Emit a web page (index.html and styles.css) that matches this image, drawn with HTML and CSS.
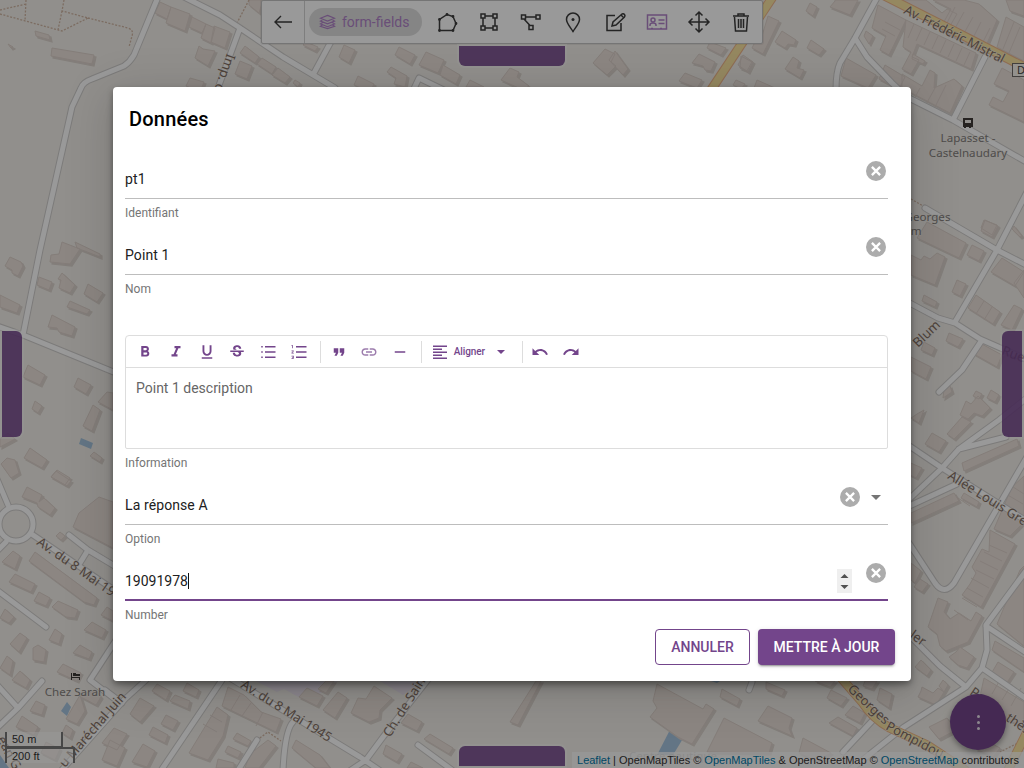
FILE: index.html
```html
<!DOCTYPE html>
<html lang="fr">
<head>
<meta charset="utf-8">
<title>Données</title>
<link rel="stylesheet" href="styles.css">
</head>
<body>
<main class="app">
<svg class="map" viewBox="0 0 1024 768" aria-hidden="true">
  <defs>
    <path id="buildings" d="M35 31l14 4 1 5-14-4zM52 48l42 7-2 9-41-8zM8 44l5 3-2 1zM160 2l11 5-4 12-12-6zM171 7l19 7-5 17-19-8zM192 17l14 7-4 9-13-6zM206 24l9 4-4 15-10-5zM214 26l16 6-5 16-14-6zM199 46l4 3 12 2-7 15-13-8zM245 46l14 11-4 6-15-10zM262 58l14 9-4 7-15-10zM278 68l12 9-5 6-13-8zM240 61l12 5-5 13-12-5zM190 78l14 4-4 10-14-6zM295 80l5 3-2 4-5-4zM249 0h14l-4 13-10-8z
    M399 47l16 8-5 9-15-9zM426 52l18 8-6 13-19-8zM443 65l17 10-4 9-16-9zM391 67l16 9-2 11-11-3 2-6-9-6zM344 45l11 5-6 13-10-6zM358 76l16 8-4 8-16-7zM470 80l14 7h-18zM306 42l12 5-3 4-12-6zM510 68l9 4-2 5 12 9-6 4-22-10z
    M605 49l10 5-4 8 5 4-9 9-14-12zM615 51l13 18-5 6-14-15zM710 42l16 6-5 7-14-7zM699 54l16 8-4 9-6-1-2-4-11-3zM743 55l10 7-5 10-10-7zM685 73l17 7-5 8-18-7zM736 80l9 4-4 5-8-4z
    M768 16l11 5-16 33-11-6 7-14 3 2zM782 31l14 9-2 5-6-1-3 4-10-6zM811 40l13 9-5 6-12-7zM793 57l6 4-2 7 7 2-4 8-15-9zM810 3l7 4-4 9-7-5zM741 56l11 6-5 9-7-3zM835 0h23l-8 15-20-8 5-6zM757 80l18 8h-21z
    M878 5l28 15-17 35-9-5 6-14-14-8zM906 20l70 33-5 16-54-25-5 13 7 3-8 14-9-5 9-17-8-5zM846 58l30 17-8 13-27-12zM902 74l20 12 8-16 5 3-1 15 20-9 8 7-12 27-48-25zM885 65l20 12-6 12-20-10zM866 31l7 5-4 8-5-8zM913 54l12 7-2 3-11-5z
    M1002 68l22 12v42l-35-17 4-8 10 5 6-11-15-7zM902 0h24l16 13 5-4 10 5-7 12zM933 0h31l15 4 18 16-14 33-43-24 11-20zM1006 17l18 10v34l-27-14zM1006 0h18v16l-14-5z
    M985 220l13 6-6 11-11-6zM927 222l39 21-7 15-42-20zM911 255l10 5 3-4 6 3 7-6 8 4-10 28-24-10zM972 245l12 6-5 10-12-6zM984 220l13 5-5 10-11-7zM957 280l9 4-6 12-8-4zM924 295l13 7-2 5-13-6zM1002 258l22 14-9 14-24-14zM976 295l24 17-7 12-25-16zM1014 305l8 4-10 21-11-5zM1014 226l8 10-2 1-8-8zM949 333l14 6-5 8-12-6zM980 343l22 12-5 12-23-13zM924 342l11 6-3 7-11-5zM911 357l20 10-5 12-15-8zM966 401l5 3 7-8 12 12-8 8-8-3-6 6-8-4zM962 417l9 5-17 17-7-5zM932 433l14 8-7 11-14-8zM944 389l6-3 2 6-9 6zM917 414l7-4-5 13-8-5zM962 463l55-24 2 7-55 25zM911 513l43-20 5 8-48 22zM964 493l15 9-2 5-16-9zM976 391l6 3-3 5-6-3zM991 390l8 5-4 7-8-4zM1024 270v28l-10-15z
    M904 460l18 8-6 10-12-6zM1012 487l12-11v46l-14 14-16-7zM990 530l25 14-34 63-19-12 8-11 6-11-4-6 10-18 7 3zM938 598l10 4-4 10 6 7 9-6 12 8 5-9 6 4-14 26-22 9-6-5-3-12-9-7zM1020 570l4-4v80l-27-22zM911 563l10 8-6 12-4-3zM920 579l8 5-6 8-8-5zM956 652l4-5 14 10-7 11-9-3-9-8zM921 660l10 10-4 6-12-9zM922 687l11 6 5-5 6 4-8 13-18-8 3-6zM943 680l5 5-4 7-5-6zM995 641l29 17v14l-32-22zM998 662l16 10-8 12-15-10zM984 678l40 24v26l-25-13-20-14zM929 727l18-9 9 12-17 9zM985 740l15 8-7 9-17-8z
    M10 257l11 5 2 4-5 10-6-3v-3l-7-4zM62 242l18 7-10 15-20-2 1-7 8-1zM75 242l25 12v3l-23-9zM39 277l13 5-3 8-12-5zM62 273l13 12-5 8-11-5 2-8-3-1zM88 284l15 9-6 9-13-8zM70 301l20 9-3 4-20-7zM52 315l23 12-3 9-13-4-2-4-9-1zM0 295l20 10-3 8-17-6zM28 365l17 10-5 10-17-8zM78 378l13 7-5 9-12-7zM93 405l7 5-8 21-9-5zM107 392l6 1v17l-15-8zM35 401l7 5-4 7-6-4zM30 448l17 12-5 8-18-10zM7 458l8 2 4 13-8 5-10-14zM94 452l8 6-2 4-10-6zM57 470l13 8-5 7-14-8zM8 433l7 6-15 8v-8z
    M56 471l15 10-4 5-16-9zM27 487l15 8-3 7 5-4 11 10-5 7-12-8-1-4-15-6zM99 497l14 5v46l-40-21 6-14zM60 532l5 4-4 4-5-4zM13 551l7 5-5 13-13-7zM35 552l62 46-3 7-10-3-55-41zM15 574l20 10-4 8-22-10zM39 592l11 6-4 8-12-5zM58 601l20 9-3 8-9-1-14-10zM5 609l9 8-5 6-9-5zM92 622l14 8-4 8-18-8zM55 629l7 5-3 10-10-4zM20 633l7 5-8 14-9-8zM33 648l5-3 8 5-2 12-11-2zM80 645l12 7-3 7-16-6zM63 664l18 9-4 8-20-9zM7 656l6 5-3 14-10-7zM20 671l10 9-4 8-14-8zM36 701l9 4-3 10-12-4zM22 716l16 11-4 8-18-8zM80 695l5 16-8 13-11-5zM95 690l6 7-5 8-17-9zM46 742l14 7-5 11-14-7zM66 725l7 5-3 8-8-5zM107 607l6 4v10l-12-6zM110 740l15 8-8 18-15-6z
    M140 698l14 8-14 16-10-8zM166 715l12 6-5 9-12-6zM187 683l12 7-3 7-13-6zM157 684l13 7-4 9-14-9zM175 695l15 6-2 8-18-8zM153 727l15 8-3 8-16-8zM114 728l13 6-10 16-15-7zM143 744l12 7-8 16-15-5zM217 707l11 8-5 21-15 24-19-7zM228 687l16 8 17 17 20 7-5 13-54-26zM237 733l14 8-3 5-15-7zM228 746l13 6-3 6-13-6zM218 759l16 4v5h-18zM268 740l8 6-17 22h-14l5-14zM296 740l24 15 10 13h-14l-24-20zM307 688l16 8-6 10-18-9zM338 692l9 6-12 20-12-8zM326 681h8l-8 12-8-4zM374 686l18 12-12 12-1 8-10 4-18-9 7-15 8 1zM408 714l14 8-5 9-16-8zM386 745l16 9-5 8-14-8zM430 734l23 14-4 6-25-15zM411 762l12 6h-16zM536 681h5l-23 44-8-3z
    M657 684l46 25 3-5 8 5-22 35-14-7-28-20 7-9-4-7zM722 689l18 10-3 7-17-9zM768 706l24 12-3 10 3 8-34-15zM724 718l48 25-3 10-62-1zM766 682l19 8-3 6-16-7zM803 738l28 15-15 8-17-8zM838 717l19 11-4 8-24-13zM831 690l16 8-6 8-14-8zM853 706l12 7-5 10-15-8zM880 688l12 6-3 14-12-8zM865 681h12l-5 8-9-3zM815 681h20l-5 6z"/>
    <g id="roads">
      <path d="M158-3L134 55Q130 62 124 66L92 79Q83 82 81 88L72 107L40 250L23 335M-3 326L23 335L116 373M180-5L220 15L240 28L283 57L335 88M240 28L218 88M340 25L314 73M411 95L419 78L456 96"/>
      <path d="M878-4L855 38L840 63Q836 72 836 90M855 38L867 57L892 83L907 97L953 120L1028 163M985 57L953 120M1028 190L997 250L955 322M925 208L997 250L1028 266M904 300L938 318L955 323L980 339L1028 360M982 340L962 370L939 392M1028 397L999 420L959 449L942 468L905 503M959 449L1006 437M905 443L942 468L1028 522M957 484L905 508M1028 455L954 583Q944 596 935 583L905 537M910 636L940 666L966 687L904 727L850 770M966 687L982 668L987 650L986 625L1028 568M986 626L1028 654M982 668L1028 700M873 720L843 752M749 690l3-8"/>
      <path d="M-3 479L8 505M33 535L120 594M-3 551L6 542M69 535L88 550L118 568M88 550L80 563M-3 590L46 627M118 637L90 680L120 703M42 681L18 708L-3 728M-3 685L18 708M146 680L125 699L60 772M105 690L122 703M222 680L160 772M230 678L360 757L382 772M430 677L383 737L366 760L345 774M293 722Q285 730 283 770M257 740L237 772M418 745L452 770"/>
      <circle cx="16" cy="524" r="17"/>
    </g>
    <path id="main-roads" d="M774-5L711 90M875-9L960 34L1028 69M842 679L862 702Q873 719 890 728L927 745L965 770M1028 730L1008 770"/>
  </defs>
  <rect class="land" width="1024" height="768"/>
  <path class="zone" d="M256 681h82l-17 12-19 6-18-10-7 3zM380 681h43l-20 14z"/>
  <path class="water" d="M81 438l12 5-2 6-12-5zM67 702l4 5-4 9-6-5zM673 724l14 8-14 23h-16zM0 755l9 13H0zM711 681h9l-3 2z"/>
  <use href="#buildings" class="building-side" transform="translate(2 2)"/>
  <use href="#buildings" class="building"/>
  <path class="walls" d="M914 24l-6 14M922 28l-6 13M930 32l-6 13M938 36l-6 13M946 40l-6 13M954 44l-6 13M962 48l-6 13M970 52l-6 13M955 7l-10 20M964 12l-11 20M973 17l-11 20M981 22l-10 20M990 28l-10 20M1014 22l-11 27M1020 27l-11 26M885 22l15 8M882 29l13 7M920 88l-8 15M935 88l-11 20M946 85l-13 26M958 498l12 8M989 545l18 8M984 552l18 9M980 561l18 9M976 570l18 9M971 578l18 10M967 588l16 9M962 598l15 9M954 610l14 10M1012 684l-10 16M1021 688l-10 18M1001 678l-9 16M1010 485l14 9M1006 494l17 10M1002 504l17 9M210 715l12 7M203 724l14 8M240 695l-9 15M251 703l-9 13M263 712l-7 14M984 301l-8 13M992 307l-8 13"/>
  <path class="footpath" d="M26 0L25 21M0 10L26 4M0 14L62 31L88 18L62 11L64 0M62 11L58 30M88 18L128 28Q134 30 132 36L129 47M249 0L237 23M257 740L268 732L281 741M911 199L925 207M1020 742L1000 752"/>
  <use href="#roads" class="road-case"/>
  <use href="#roads" class="road"/>
  <use href="#main-roads" class="main-case"/>
  <use href="#main-roads" class="main-road"/>
  <g class="street-label">
    <text transform="translate(227 53) rotate(109)">Imp. du</text>
    <text transform="translate(903 13) rotate(27)" textLength="111">Av. Frédéric Mistral</text>
    <text transform="translate(918 348) rotate(-44)">Blum</text>
    <text transform="translate(1001 354) rotate(21)">Rue</text>
    <text transform="translate(947 478) rotate(32)">Allée Louis Grenier</text>
    <text transform="translate(36 544) rotate(35)">Av. du 8 Mai 1945</text>
    <text transform="translate(240 687) rotate(32)" textLength="104">Av. du 8 Mai 1945</text>
    <text transform="translate(390 738) rotate(-58)">Ch. de Sainte</text>
    <text transform="translate(65 768) rotate(-49)">u Maréchal Juin</text>
    <text transform="translate(847 690) rotate(43)">Georges</text>
    <text transform="translate(885 729) rotate(28)">Pompidou</text>
    <text transform="translate(909 637) rotate(35)">ler</text>
    <text transform="translate(969 694) rotate(34)">Parc</text>
    <text transform="translate(1005 720) rotate(34)">thès</text>
    <text transform="translate(-3 739) rotate(62)">ean G</text>
  </g>
  <g class="place-label">
    <text x="968" y="142">Lapasset -</text><text x="968" y="157">Castelnaudary</text>
    <text x="927.500" y="221">Georges</text><text x="913" y="235">em</text>
    <text x="75" y="696">Chez Sarah</text>
    <text class="pale" x="673" y="760">Centre nautique</text>
  </g>
  <path class="poi" fill-rule="evenodd" d="M963 118h10v9h-2v1h-2v-1h-3v1h-2v-1h-1zM965 120v3h6v-3zM71 673h1v4h8v3h-1v-2h-7v2h-1zM73 673h3v3h-3zM76 674h4v2h-4z"/>
  <rect class="shield" x="1012.5" y="63.5" width="20" height="13"/>
  <text class="shield-text" x="1017" y="74">D</text>
</svg>

<nav class="toolbar">
  <button class="back"><svg class="tool" viewBox="0 0 24 24"><path d="M21 12H4M10 6l-6 6 6 6"/></svg></button>
  <div class="tools">
    <span class="chip"><svg class="layers" viewBox="0 0 18 16"><path d="M9 1l7.500 3L9 7 1.500 4zM4 5.500L1.500 7 9 10l7.500-3L14 5.500M4 8.500L1.500 10 9 13l7.500-3L14 8.500M4 11L1.500 12.500 9 15l7.500-2.500L14 11"/></svg>form-fields</span>
    <svg class="tool" viewBox="0 0 24 24"><path d="M4.500 20.500V9.500l7.500-5 6 2 3 7-3 7z"/><path class="dots" d="M4.500 20.500h0M4.500 9.500h0M12 4.500h0M18 6.500h0M21 13.500h0M18 20.500h0"/></svg>
    <svg class="tool" viewBox="0 0 24 24"><path d="M4 4h4v4H4zM16 4h4v4h-4zM4 16h4v4H4zM16 16h4v4h-4zM8 6h8M8 18h8M6 8v8M18 8v8"/></svg>
    <svg class="tool" viewBox="0 0 24 24"><path d="M2.500 5h4v4h-4zM17 5h4v4h-4zM10 15.500h4v4h-4zM6.500 7H17M5 9l6 6.500"/></svg>
    <svg class="tool" viewBox="0 0 24 24"><path d="M12 21.500C9 17 5.500 13 5.500 9.500a6.500 6.500 0 0 1 13 0c0 3.500-3.500 7.500-6.500 12z"/><circle class="solid" cx="12" cy="9.500" r="1.500"/></svg>
    <svg class="tool" viewBox="0 0 24 24"><path d="M12 5.500H4V20.500H18V13M9 16l1-4 9-8q1.500-.8 2.500.5t0 2.500L13 15zM18 5l3 3"/></svg>
    <svg class="tool active" viewBox="0 0 24 24"><path d="M2.500 5h19v14h-19zM13.500 10h6M13.500 13.500h6M5 16v-1q0-2 3-2t3 2v1M6 18.500h2M15 18.500h2"/><circle cx="8" cy="10" r="2"/></svg>
    <svg class="tool" viewBox="0 0 24 24"><path d="M12 2v20M2 12h20M8.500 5.500L12 2l3.500 3.500M8.500 18.500L12 22l3.500-3.500M5.500 8.500L2 12l3.500 3.500M18.500 8.500L22 12l-3.500 3.500"/></svg>
    <svg class="tool" viewBox="0 0 24 24"><path d="M4 6h16M9 6V4h6v2M5.500 7l1 14h11l1-14M9.500 9v9M12 9v9M14.500 9v9"/></svg>
  </div>
</nav>
<i class="pan top"></i><i class="pan left"></i><i class="pan right"></i><i class="pan bottom"></i>
<div class="scale"><span class="metric">50 m</span><span class="imperial">200 ft</span></div>
<div class="credits"><a>Leaflet</a> | OpenMapTiles © <a>OpenMapTiles</a> &amp; OpenStreetMap © <a>OpenStreetMap</a> contributors</div>
<button class="fab"><i></i><i></i><i></i></button>

<div class="backdrop">
  <section class="dialog">
    <h1>Données</h1>
    <div class="fields">
      <div class="field"><div class="control"><span class="value">pt1</span><svg class="clear" viewBox="0 0 20 20"><circle cx="10" cy="10" r="10"/><path d="M5.900 5.900l8.200 8.200M14.100 5.900l-8.200 8.200"/></svg></div><span class="hint">Identifiant</span></div>
      <div class="field"><div class="control"><span class="value">Point 1</span><svg class="clear" viewBox="0 0 20 20"><circle cx="10" cy="10" r="10"/><path d="M5.900 5.900l8.200 8.200M14.100 5.900l-8.200 8.200"/></svg></div><span class="hint">Nom</span></div>
      <div class="rich">
        <div class="editor">
          <div class="format">
            <svg class="fi" viewBox="0 0 24 24"><path d="M15.600 10.790c.97-.67 1.650-1.770 1.650-2.790 0-2.260-1.750-4-4-4H7v14h7.040c2.090 0 3.710-1.700 3.710-3.790 0-1.520-.86-2.820-2.150-3.420zM10 6.500h3c.83 0 1.500.67 1.500 1.500s-.67 1.500-1.500 1.500h-3v-3zm3.500 9H10v-3h3.500c.83 0 1.500.67 1.500 1.500s-.67 1.500-1.500 1.500z"/></svg>
            <svg class="fi" viewBox="0 0 24 24"><path d="M10 4v3h2.210l-3.420 8H6v3h8v-3h-2.210l3.420-8H18V4z"/></svg>
            <svg class="fi" viewBox="0 0 24 24"><path d="M12 17c3.310 0 6-2.690 6-6V3h-2.500v8c0 1.930-1.570 3.500-3.500 3.500S8.500 12.930 8.500 11V3H6v8c0 3.310 2.690 6 6 6zm-7 2v2h14v-2H5z"/></svg>
            <svg class="fi" viewBox="0 0 24 24"><path d="M7.240 8.750c-.26-.48-.39-1.030-.39-1.670 0-.61.13-1.160.4-1.670.26-.5.63-.93 1.110-1.290.48-.35 1.050-.63 1.700-.83.66-.19 1.390-.29 2.180-.29.81 0 1.540.11 2.210.34.66.22 1.230.54 1.690.94.47.4.83.88 1.080 1.430s.38 1.150.38 1.810h-3.010c0-.31-.05-.59-.15-.85-.09-.27-.24-.49-.44-.68-.2-.19-.45-.33-.75-.44-.3-.1-.66-.16-1.060-.16-.39 0-.74.04-1.030.13s-.53.21-.72.36c-.19.16-.34.34-.44.55-.1.210-.15.430-.15.660 0 .48.25.88.74 1.210.38.250.77.480 1.410.70H7.390c-.05-.08-.11-.17-.15-.25zM21 12v-2H3v2h9.620c.18.070.4.140.55.200.37.170.66.340.87.510s.35.360.43.570c.07.200.11.430.11.690 0 .23-.05.45-.14.66-.09.20-.23.38-.42.53-.19.15-.42.26-.71.35-.29.080-.63.130-1.010.130-.43 0-.83-.04-1.180-.13s-.66-.23-.91-.42c-.25-.19-.45-.44-.59-.75s-.25-.76-.25-1.210H6.400c0 .55.080 1.130.24 1.580s.37.850.65 1.210c.28.350.60.660.98.920.37.260.78.480 1.220.65.44.17.90.30 1.380.39.48.080.96.130 1.440.130.80 0 1.530-.09 2.180-.28s1.210-.45 1.670-.79c.46-.34.82-.77 1.070-1.270s.38-1.070.38-1.710c0-.60-.10-1.140-.31-1.610-.05-.11-.11-.23-.17-.33H21V12z"/></svg>
            <svg class="fi" viewBox="0 0 24 24"><path d="M3 4h2v2H3zM3 11h2v2H3zM3 18h2v2H3zM8 4h14v2H8zM8 11h14v2H8zM8 18h14v2H8z"/></svg>
            <svg class="fi" viewBox="0 0 24 24"><path d="M8 4h14v2H8zM8 11h14v2H8zM8 18h14v2H8zM2 3h2v4H3V4H2zM2 10h3v1l-2 2h2v1H2v-1l2-2H2zM2 17h3v4H2v-1h2v-.5H3v-1h1V18H2z"/></svg>
            <i class="rule"></i>
            <svg class="fi" viewBox="0 0 24 24"><path d="M6 17h3l2-4V7H5v6h3zm8 0h3l2-4V7h-6v6h3z"/></svg>
            <svg class="fi thin" viewBox="0 0 24 24"><path d="M3.900 12c0-1.710 1.390-3.100 3.100-3.100h4V7H7c-2.760 0-5 2.240-5 5s2.240 5 5 5h4v-1.900H7c-1.710 0-3.100-1.390-3.100-3.100zM8 13h8v-2H8v2zm9-6h-4v1.900h4c1.710 0 3.100 1.390 3.100 3.100s-1.390 3.100-3.100 3.100h-4V17h4c2.760 0 5-2.240 5-5s-2.240-5-5-5z"/></svg>
            <svg class="fi" viewBox="0 0 24 24"><path d="M5 11h14v2H5z"/></svg>
            <i class="rule"></i>
            <span class="align"><svg class="align-icon" viewBox="0 0 18 18"><path d="M2 2.500h14v1.400H2zM2 5.500h9v1.400H2zM2 8.500h14v1.400H2zM2 11.500h9v1.400H2zM2 14.500h14v1.400H2z"/></svg>Aligner<i class="caret small"></i></span>
            <i class="rule"></i>
            <svg class="fi" viewBox="0 0 24 24"><path d="M12.500 8c-2.650 0-5.050.99-6.900 2.600L2 7v9h9l-3.620-3.620c1.390-1.160 3.160-1.880 5.120-1.880 3.540 0 6.550 2.310 7.600 5.500l2.370-.78C21.080 11.030 17.150 8 12.500 8z"/></svg>
            <svg class="fi" viewBox="0 0 24 24"><path d="M18.400 10.600C16.550 8.990 14.150 8 11.500 8c-4.650 0-8.580 3.030-9.960 7.220L3.900 16c1.050-3.190 4.050-5.500 7.600-5.500 1.950 0 3.730.72 5.120 1.880L13 16h9V7l-3.600 3.600z"/></svg>
          </div>
          <p class="copy">Point 1 description</p>
        </div>
        <span class="hint">Information</span>
      </div>
      <div class="field"><div class="control"><span class="value">La réponse A</span><svg class="clear" viewBox="0 0 20 20"><circle cx="10" cy="10" r="10"/><path d="M5.900 5.900l8.200 8.200M14.100 5.900l-8.200 8.200"/></svg><i class="caret"></i></div><span class="hint">Option</span></div>
      <div class="field focused"><div class="control"><span class="value"><span class="typed">19091978</span></span><svg class="spinner" viewBox="0 0 15 24"><path d="M3.500 9L7.500 5l4 4zM3.500 16l4 4 4-4z"/></svg><svg class="clear" viewBox="0 0 20 20"><circle cx="10" cy="10" r="10"/><path d="M5.900 5.900l8.200 8.200M14.100 5.900l-8.200 8.200"/></svg></div><span class="hint">Number</span></div>
    </div>
    <div class="actions"><button class="btn outline">ANNULER</button><button class="btn filled">METTRE À JOUR</button></div>
  </section>
</div>
</main>
</body>
</html>
```

FILE: styles.css
```css
* { box-sizing: border-box; }
body { margin: 0; font-family: Roboto, sans-serif; }
button { font: inherit; padding: 0; border: 0; background: none; }
svg { display: block; flex: none; }
.app { position: relative; width: 1024px; height: 768px; overflow: hidden; }
.map { position: absolute; inset: 0; width: 1024px; height: 768px; }
.land { fill: #f2efe9; }
.zone { fill: #ebe3ee; }
.water { fill: #a6c4de; }
.building { fill: #eadfd9; stroke: #dcd1ca; stroke-width: 1; }
.building-side { fill: #dad2cc; stroke: #dad2cc; stroke-width: 1.2; }
.walls { stroke: #dcd1ca; fill: none; }
.road-case, .road, .main-case, .main-road { fill: none; stroke-linecap: round; stroke-linejoin: round; }
.road-case { stroke: #cfcdcc; stroke-width: 7; }
.road { stroke: #fff; stroke-width: 5; }
.main-case { stroke: #eeb58a; stroke-width: 9.5; }
.main-road { stroke: #f9e3a0; stroke-width: 7.5; }
.footpath { fill: none; stroke: #cfb5a3; stroke-width: 1.3; stroke-dasharray: 2 1.5; }
.street-label, .place-label { font-family: "Noto Sans", sans-serif; paint-order: stroke; stroke: #f2efe9; stroke-opacity: .6; stroke-width: 1.5px; }
.street-label { font-size: 13px; fill: #826e63; }
.place-label { font-size: 11.6px; fill: #84807d; text-anchor: middle; }
.pale { opacity: .55; }
.poi { fill: #403b38; }
.shield { fill: #f5f2ec; stroke: #6e6a66; }
.shield-text { font: 11px "Noto Sans", sans-serif; fill: #444; }

.toolbar { position: absolute; left: 261px; top: 0; width: 502px; height: 44px; display: flex; background: #fff; border: 1px solid #c3c3c3; border-radius: 2px; box-shadow: 0 0 0 1px rgba(0,0,0,.06); }
.back { width: 43px; border-right: 1px solid #d2d2d2; display: grid; place-items: center; }
.tools { display: flex; align-items: center; gap: 18px; padding-left: 4px; }
.chip { display: flex; align-items: center; gap: 6px; width: 113px; height: 28px; padding-left: 10px; margin-right: -5px; border-radius: 14px; background: #dedede; color: #b083c8; font-size: 14px; }
.layers { width: 17px; height: 16px; fill: none; stroke: #b083c8; stroke-width: 1.2; }
.tool { width: 24px; height: 24px; fill: none; stroke: #3d3d3d; stroke-width: 1.5; }
.back .tool { stroke-width: 1.4; }
.tool.active { stroke: #b083c8; }
.dots { stroke: #3d3d3d; stroke-width: 2.8; stroke-linecap: round; }
.solid { fill: #3d3d3d; stroke: none; }

.pan { position: absolute; background: rgba(115,69,139,.88); box-shadow: 0 0 0 2px rgba(255,255,255,.35); }
.pan.top { left: 459px; top: 46px; width: 106px; height: 20px; border-radius: 0 0 6px 6px; }
.pan.bottom { left: 459px; bottom: 2px; width: 106px; height: 20px; border-radius: 6px 6px 0 0; }
.pan.left { left: 2px; top: 331px; width: 20px; height: 106px; border-radius: 0 6px 6px 0; }
.pan.right { right: 2px; top: 331px; width: 20px; height: 106px; border-radius: 6px 0 0 6px; }
.scale { position: absolute; left: 5px; bottom: 5px; display: flex; flex-direction: column; align-items: flex-start; font: 11px/13px "Liberation Sans", sans-serif; color: #333; }
.scale span { height: 16px; padding: 1px 5px; border: 2px solid #777; border-top: 0; background: rgba(255,255,255,.5); }
.scale .metric { width: 58px; }
.scale .imperial { width: 70px; height: 16px; margin-top: -1px; border-top: 2px solid #777; border-bottom: 0; }
.credits { position: absolute; right: 0; bottom: 0; height: 16px; padding: 0 5px; background: rgba(255,255,255,.7); font: 11px/17px "Liberation Sans", sans-serif; color: #333; white-space: nowrap; }
.credits a { color: #0078a8; }
.fab { position: absolute; right: 18px; bottom: 18px; width: 56px; height: 56px; border-radius: 50%; background: #73458b; display: flex; flex-direction: column; align-items: center; justify-content: center; gap: 3px; box-shadow: 0 3px 5px rgba(0,0,0,.25), 0 1px 10px rgba(0,0,0,.15); }
.fab i { width: 3px; height: 3px; border-radius: 50%; background: #e9e2ec; }

.backdrop { position: absolute; inset: 0; display: flex; justify-content: center; align-items: center; background: rgba(0,0,0,.4); }
.dialog { width: 798px; height: 594px; display: flex; flex-direction: column; padding: 16px; border-radius: 4px; background: #fff; box-shadow: 0 11px 15px -7px rgba(0,0,0,.2), 0 9px 46px 8px rgba(0,0,0,.12), 0 3px 6px rgba(0,0,0,.35); }
h1 { margin: 0; font-size: 20px; line-height: 32px; font-weight: 500; letter-spacing: .2px; color: #000; }
.fields { margin: 8px 7px 0 -4px; }
.field { height: 76px; }
.control { height: 56px; padding: 10px 2px 0 0; display: flex; align-items: flex-start; border-bottom: 1px solid #bdbdbd; }
.value { flex: 1; padding-top: 14px; font-size: 14px; line-height: 24px; letter-spacing: .1px; color: #212121; }
.control .clear { margin-top: 8px; }
.clear { width: 20px; height: 20px; }
.clear circle { fill: #acacac; }
.clear path { stroke: #fff; stroke-width: 2.300; }
.hint { display: block; padding-top: 7px; font-size: 12px; line-height: 14px; color: #757575; }
.caret { width: 0; height: 0; margin: 15.500px 5px 0 11px; border: 5px solid transparent; border-top-color: #757575; border-bottom: 0; }
.focused .control { border-bottom: 2px solid #73458b; }
.focused .value { letter-spacing: 0; }
.typed { border-right: 1px solid #111; }
.spinner { width: 15px; height: 24px; margin: 14px 14px 0 0; background: #efefef; fill: #505050; }
.rich { height: 174px; padding-top: 40px; }
.editor { height: 114px; border: 1px solid #ddd; border-radius: 4px 4px 2px 2px; }
.format { height: 32px; padding-left: 10px; display: flex; align-items: center; gap: 12.800px; border-bottom: 1px solid #ddd; color: #73458b; }
.fi { width: 18px; height: 18px; fill: #73458b; }
.fi.thin { opacity: .7; }
.format .rule { width: 1px; height: 22px; margin: 0 -4px 0 -1px; background: #ddd; }
.align { display: flex; align-items: center; width: 79px; font-size: 10px; font-weight: 500; letter-spacing: -.1px; }
.align-icon { width: 18px; height: 18px; margin-right: 5px; fill: #73458b; }
.caret.small { margin: 1px 0 0 12.500px; border-width: 4px 4px 0; border-top-color: #73458b; }
.copy { margin: 0; padding: 10px; font-size: 14px; line-height: 20px; color: #666; }
.actions { display: flex; justify-content: flex-end; gap: 8px; margin-top: auto; }
.btn { height: 36px; border-radius: 4px; font-size: 14px; font-weight: 500; line-height: 36px; }
.outline { width: 95px; border: 1px solid #73458b; color: #73458b; line-height: 34px; }
.filled { width: 137px; background: #73458b; color: #fff; box-shadow: 0 3px 1px -2px rgba(0,0,0,.2), 0 2px 2px rgba(0,0,0,.14), 0 1px 5px rgba(0,0,0,.12); }
```
